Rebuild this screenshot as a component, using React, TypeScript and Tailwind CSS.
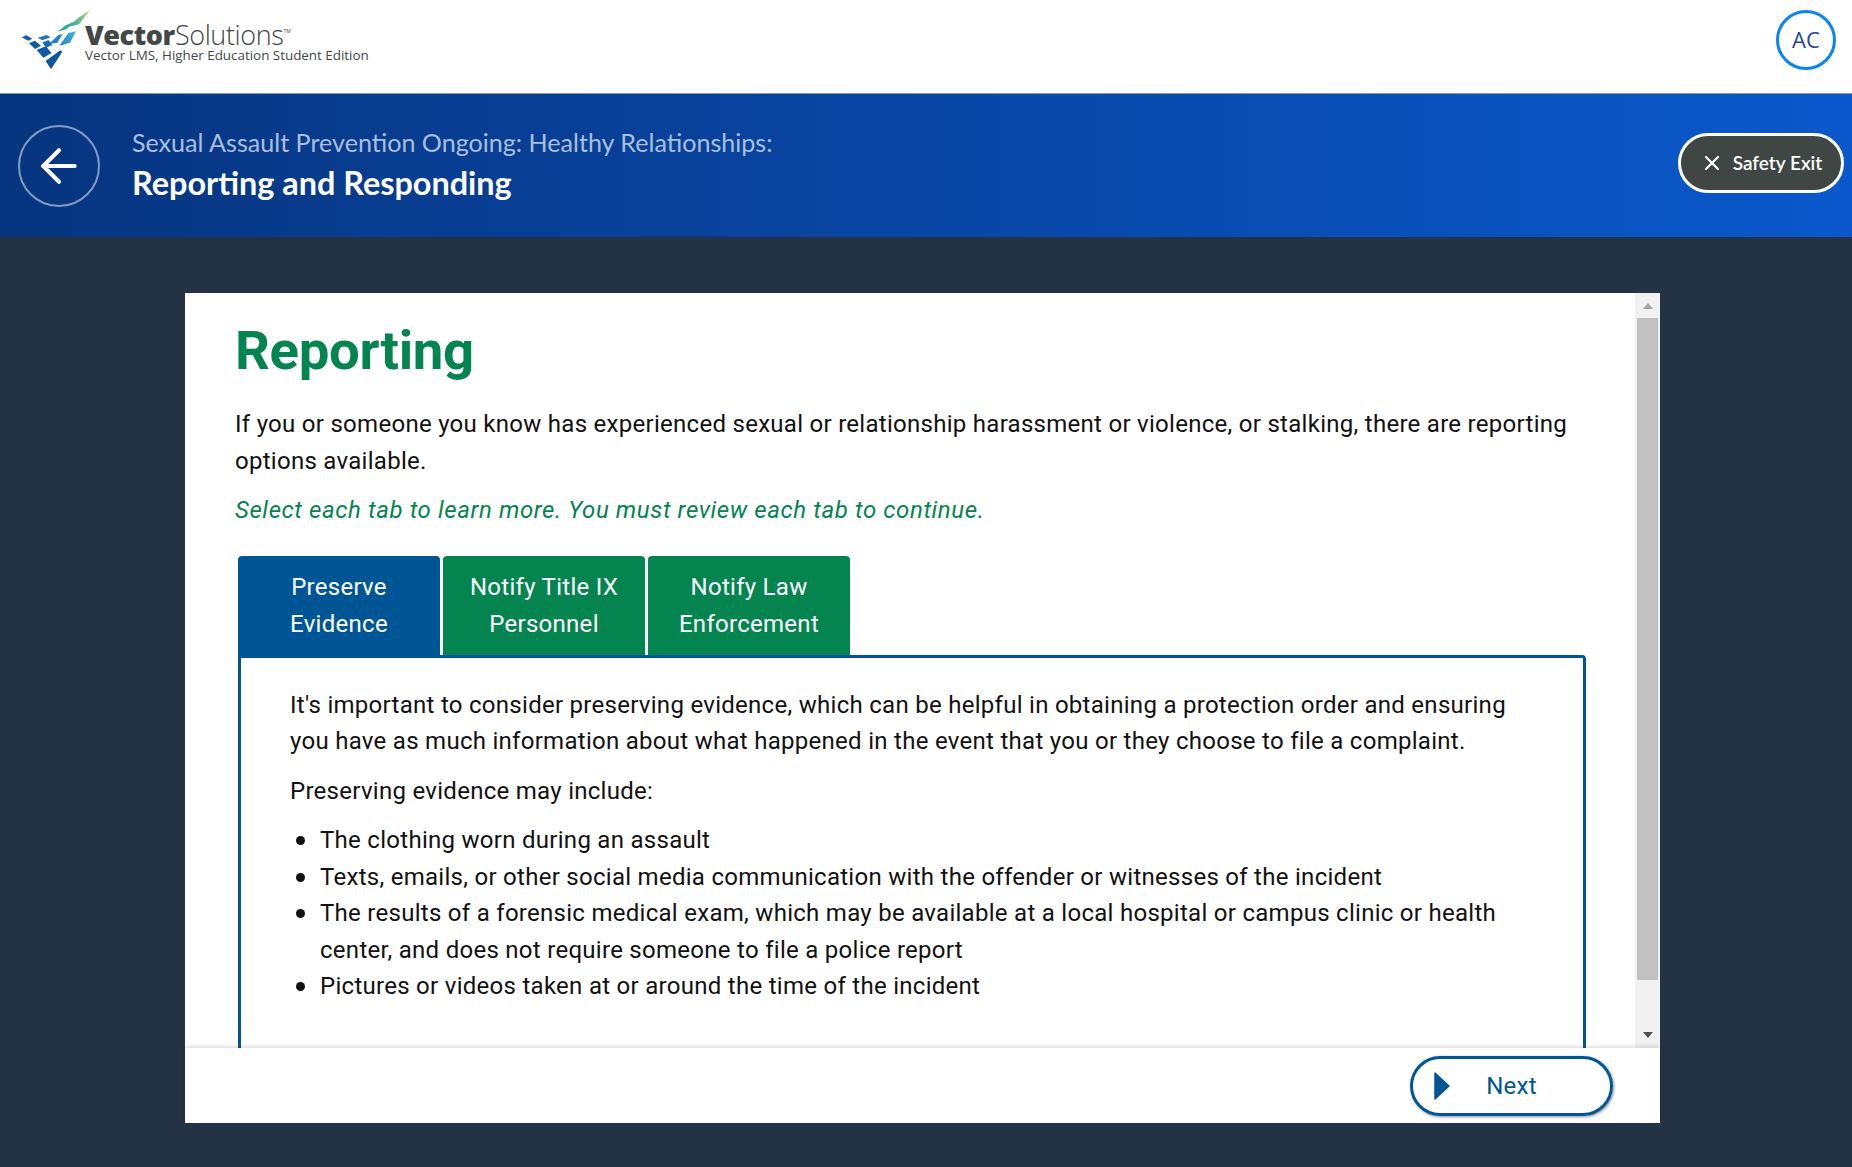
import { ArrowLeft, X } from 'lucide-react';

const roboto = 'font-[Roboto,sans-serif]';

function Logo() {
  return (
    <svg width="90" height="70" viewBox="0 0 270 210" className="shrink-0">
      <defs>
        <linearGradient id="leaf" x1="0" y1="1" x2="1" y2="0">
          <stop offset="0" stopColor="#1fa3a8" />
          <stop offset="1" stopColor="#c2da74" />
        </linearGradient>
        <linearGradient id="sky" x1="0" y1="1" x2="1" y2="0">
          <stop offset="0" stopColor="#2581c4" />
          <stop offset="1" stopColor="#45b4de" />
        </linearGradient>
      </defs>
      <polygon points="20,97 34,91 52,101 40,107" fill="#0f5fa8" />
      <polygon points="68,98 95,90 107,97 82,106" fill="#1c74b8" />
      <polygon points="102,116 130,90 143,87 127,114" fill="#2583c6" />
      <polygon points="133,122 160,84 183,79 165,113" fill="url(#sky)" />
      <polygon points="42,115 60,107 78,122 60,132" fill="#0e5ca4" />
      <polygon points="82,113 100,105 112,120 94,128" fill="#146bb0" />
      <polygon points="65,135 92,124 110,144 85,158" fill="#0d5aa2" />
      <polygon points="92,168 136,136 142,140 108,193" fill="#0b559c" />
      <polygon points="128,80 150,62 175,50 155,72" fill="#27a9a0" />
      <polygon points="158,66 190,38 225,15 192,58" fill="url(#leaf)" />
    </svg>
  );
}

const bullet =
  "relative before:absolute before:top-[14px] before:-left-[24px] before:h-[9px] before:w-[9px] before:rounded-full before:bg-[#111] before:content-['']";

export default function App() {
  return (
    <div className="flex h-[1167px] flex-col overflow-hidden bg-[#233343]">
      <header className="flex h-[94px] shrink-0 items-start justify-between border-b border-[#8b97a5] bg-white pr-4 pl-[15px]">
        <div className="flex items-start pt-[5px]">
          <Logo />
          <div className="-ml-[20px] pt-[16px] font-['Open_Sans',sans-serif] text-[#414845]">
            <div className="text-[27px] leading-[27px] tracking-[-0.4px]">
              <span className="font-extrabold">Vector</span>
              <span className="font-light">Solutions</span>
              <span className="relative -top-[12px] text-[5px] tracking-normal">TM</span>
            </div>
            <div className="-mt-[10px] text-[13.4px] leading-[16px]">Vector LMS, Higher Education Student Edition</div>
          </div>
        </div>
        <div className="mt-[10px] flex h-[60px] w-[60px] items-center justify-center rounded-full border-[3px] border-[#0a84f5] pb-[2px] font-['Open_Sans',sans-serif] text-[22px] text-[#1f4596]">
          AC
        </div>
      </header>

      <div className="flex h-[143px] shrink-0 items-center justify-between bg-gradient-to-r from-[#07357f] to-[#0a58cc] pr-[8px] pl-[18px]">
        <div className="flex items-center gap-[32px]">
          <div className="flex h-[82px] w-[82px] items-center justify-center rounded-full border-2 border-white/50">
            <ArrowLeft size={54} strokeWidth={1.8} className="text-white" />
          </div>
          <div className="pb-[2px] font-[Lato,sans-serif]">
            <div className="text-[25.1px] leading-[34px] text-[#a9bfdf]">
              Sexual Assault Prevention Ongoing: Healthy Relationships:
            </div>
            <div className="mt-[3px] text-[32.4px] leading-[42px] font-bold text-white">Reporting and Responding</div>
          </div>
        </div>
        <div className="mb-[5px] flex h-[60px] w-[166px] items-center justify-center gap-[9px] rounded-full border-[3px] border-white bg-[#404644] font-[Lato,sans-serif] text-[19px] font-semibold text-white">
          <X size={24} strokeWidth={2.2} />
          <span>Safety Exit</span>
        </div>
      </div>

      <main className="flex flex-1 items-start pt-[56px] pl-[185px]">
        <div className={`flex h-[830px] w-[1475px] flex-col bg-white ${roboto}`}>
          <div className="flex h-[755px] shrink-0 overflow-hidden">
            <div className="flex-1 overflow-hidden pl-[50px] text-[24px] leading-[36.5px] tracking-[0.28px] text-[#111]">
              <h1 className="pt-[21px] text-[54.5px] leading-[72px] font-bold tracking-[-0.3px] text-[#04844f]">Reporting</h1>
              <p className="mt-[20px] w-[1360px]">
                If you or someone you know has experienced sexual or relationship harassment or violence, or stalking, there are reporting options available.
              </p>
              <p className="mt-[13px] tracking-[0.6px] text-[#04844f] italic">Select each tab to learn more. You must review each tab to continue.</p>

              <div className="mt-[27px] ml-[3px] flex gap-[3px] text-center leading-[37px] text-white">
                <div className="h-[99px] w-[202px] rounded-t bg-[#005695] pt-[13px]">Preserve<br />Evidence</div>
                <div className="h-[99px] w-[202px] rounded-t bg-[#04844f] pt-[13px]">Notify Title IX<br />Personnel</div>
                <div className="h-[99px] w-[202px] rounded-t bg-[#04844f] pt-[13px]">Notify Law<br />Enforcement</div>
              </div>
              <div className="ml-[3px] h-[500px] w-[1348px] rounded-tr border-[3px] border-[#005695] px-[49px] pt-[29px]">
                <p>
                  It's important to consider preserving evidence, which can be helpful in obtaining a protection order and ensuring you have as much information about what happened in the event that you or they choose to file a complaint.
                </p>
                <p className="mt-[13px]">Preserving evidence may include:</p>
                <ul className="mt-[13px] list-none pl-[30px]">
                  <li className={bullet}>The clothing worn during an assault</li>
                  <li className={bullet}>Texts, emails, or other social media communication with the offender or witnesses of the incident</li>
                  <li className={bullet}>The results of a forensic medical exam, which may be available at a local hospital or campus clinic or health center, and does not require someone to file a police report</li>
                  <li className={bullet}>Pictures or videos taken at or around the time of the incident</li>
                </ul>
              </div>
            </div>

            <div className="flex w-[25px] shrink-0 flex-col items-center bg-[#f1f1f1]">
              <div className="flex h-[25px] w-full items-center justify-center">
                <div className="h-0 w-0 border-x-[5px] border-b-[6px] border-x-transparent border-b-[#a3a3a3]" />
              </div>
              <div className="h-[662px] w-[21px] bg-[#c1c1c1]" />
              <div className="flex flex-1 items-center justify-center pt-[42px]">
                <div className="h-0 w-0 border-x-[5px] border-t-[6px] border-x-transparent border-t-[#505050]" />
              </div>
            </div>
          </div>

          <footer className="flex flex-1 items-center justify-end pr-[47px] shadow-[0_-2px_4px_rgba(0,0,0,0.12)]">
            <div className="relative flex h-[60px] w-[203px] items-center justify-center rounded-full border-[3px] border-[#005695] pt-[1px] text-[24px] tracking-[0.25px] text-[#005695] shadow-[1px_1px_3px_rgba(0,0,0,0.45)]">
              <svg width="16" height="28" viewBox="0 0 16 28" className="absolute top-[13px] left-[21px]">
                <path d="M1 1 L15 14 L1 27 Z" fill="#005695" stroke="#005695" strokeWidth="1.5" strokeLinejoin="round" />
              </svg>
              <span>Next</span>
            </div>
          </footer>
        </div>
      </main>
    </div>
  );
}
